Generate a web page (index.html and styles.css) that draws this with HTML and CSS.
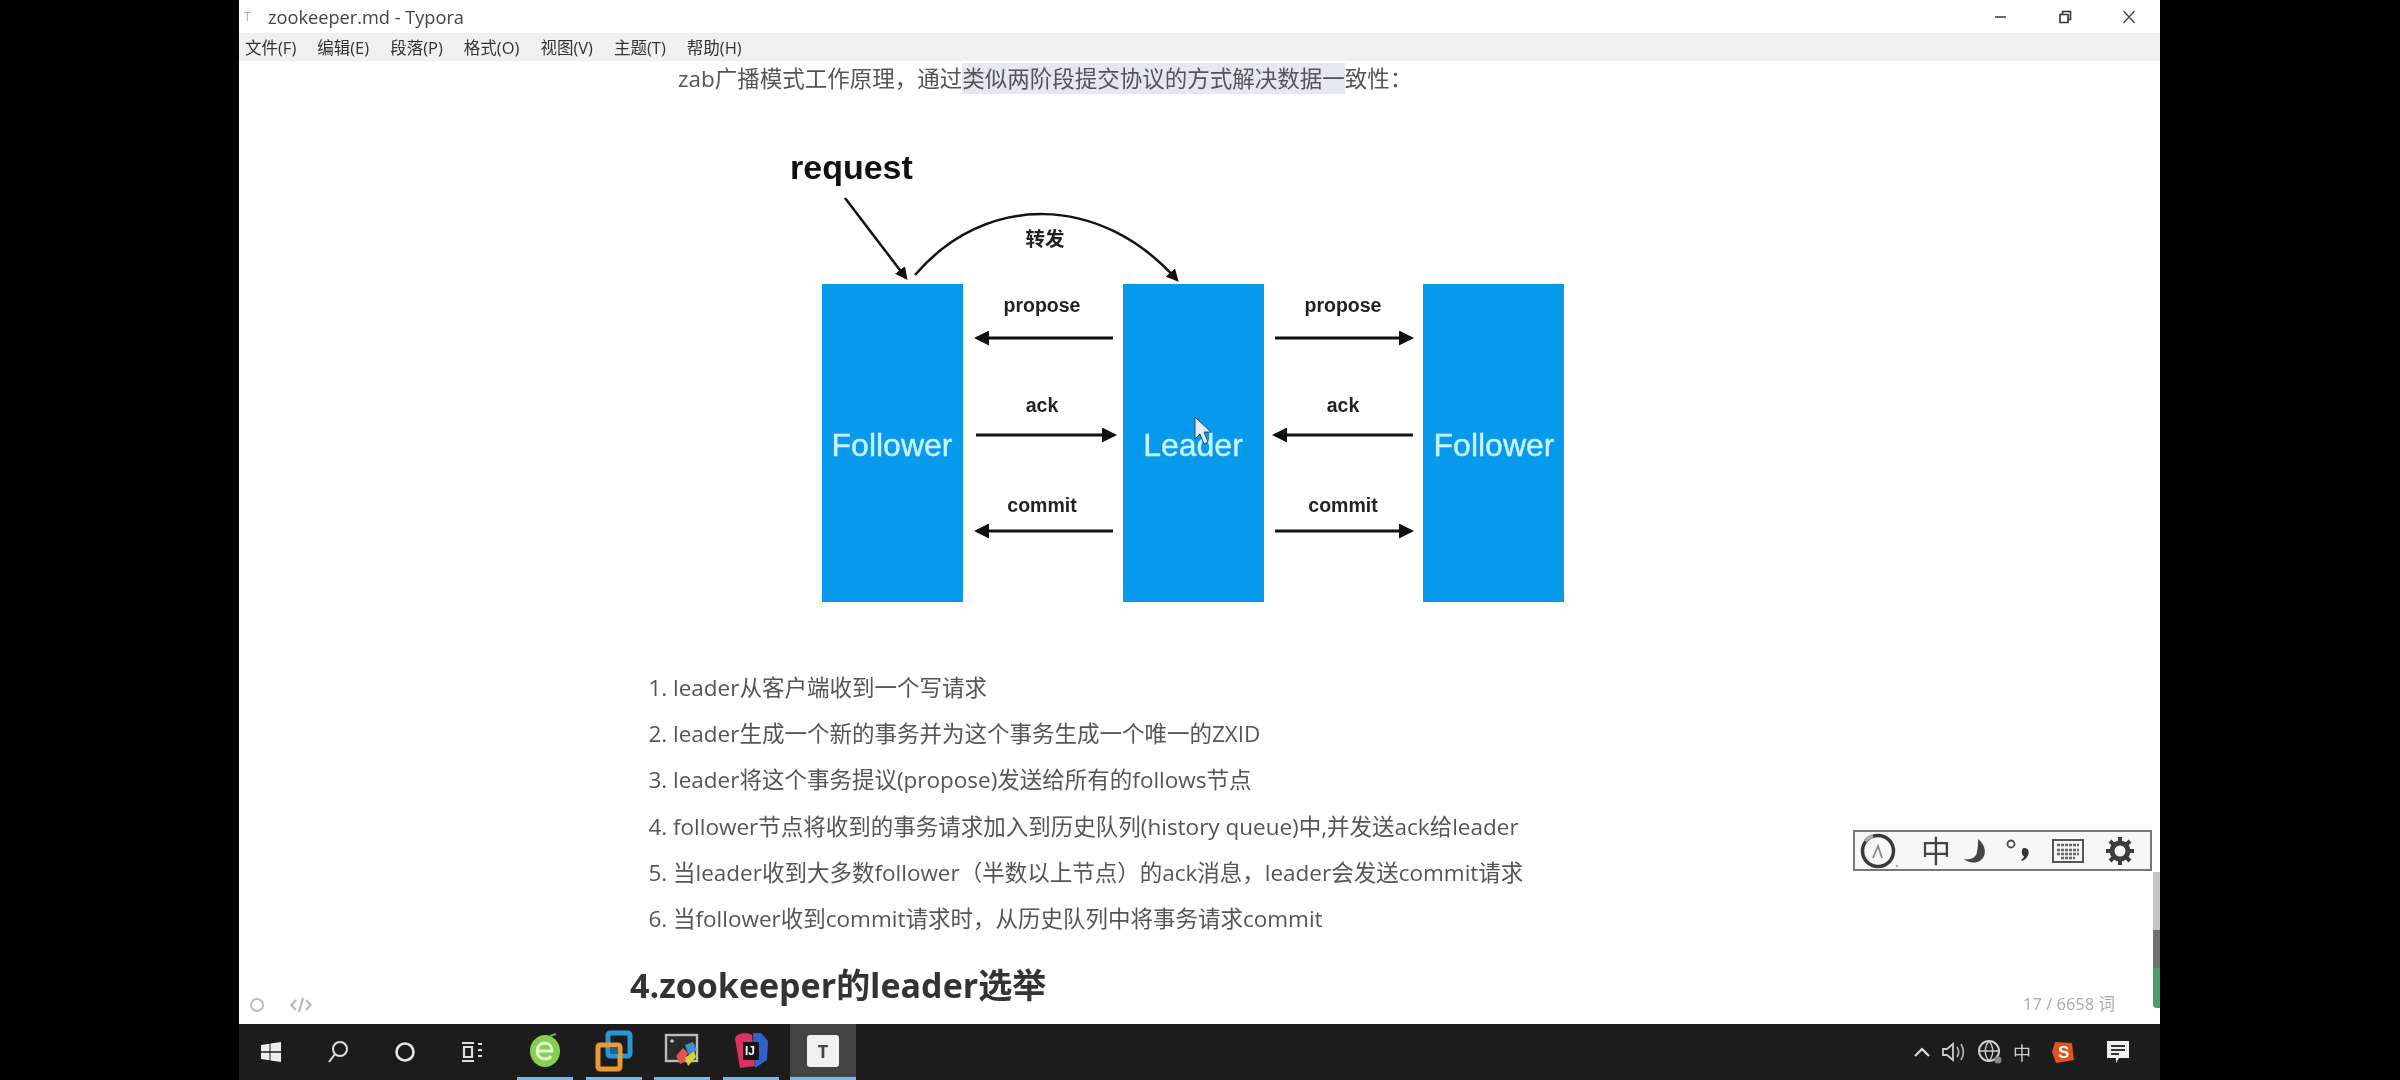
FILE: index.html
```html
<!DOCTYPE html>
<html lang="en">
<head>
  <meta charset="UTF-8">
  <title>zookeeper.md - Typora</title>
  <link rel="stylesheet" href="styles.css">
</head>
<body>

  <div class="window">
    <div class="titlebar">
      <span class="app-mark">T</span>
      <span class="title-text">zookeeper.md - Typora</span>
      <div class="win-buttons">
        <svg width="14" height="14" viewBox="0 0 14 14"><path d="M1 7h11" stroke="#444" stroke-width="1.6"/></svg>
        <svg width="14" height="14" viewBox="0 0 14 14"><path d="M2 4.500h8v8h-8zM4.500 4V1.500h8v8H10.500" fill="none" stroke="#333" stroke-width="1.6"/></svg>
        <svg width="14" height="14" viewBox="0 0 14 14"><path d="M1.500 1l11 12M12.500 1l-11 12" stroke="#444" stroke-width="1.3"/></svg>
      </div>
    </div>

    <div class="menubar">
      <span>文件(F)</span>
      <span>编辑(E)</span>
      <span>段落(P)</span>
      <span>格式(O)</span>
      <span>视图(V)</span>
      <span>主题(T)</span>
      <span>帮助(H)</span>
    </div>

    <div class="editor">
      <p class="intro">zab广播模式工作原理，通过<span class="selected">类似两阶段提交协议的方式解决数据一</span>致性：</p>

      <!-- zab diagram -->
      <svg class="diagram" width="840" height="490" viewBox="0 0 840 490">
        <defs>
          <marker id="head" markerWidth="5" markerHeight="5" refX="4" refY="2.5" orient="auto">
            <path d="M0 0L5 2.5L0 5z" fill="#111"/>
          </marker>
        </defs>
        <text class="d-request" x="30" y="48">request</text>
        <path class="d-line thin" d="M85 67L146 147" marker-end="url(#head)"/>
        <path class="d-line thin" d="M155 144C225 62 340 62 417 149" marker-end="url(#head)"/>
        <text class="d-label" x="285" y="115">转发</text>

        <rect class="d-box" x="62" y="153" width="141" height="318"/>
        <rect class="d-box" x="363" y="153" width="141" height="318"/>
        <rect class="d-box" x="663" y="153" width="141" height="318"/>
        <text class="d-name" x="132" y="325">Follower</text>
        <text class="d-name" x="433" y="325">Leader</text>
        <text class="d-name" x="734" y="325">Follower</text>

        <text class="d-label" x="282" y="181">propose</text>
        <text class="d-label" x="583" y="181">propose</text>
        <text class="d-label" x="282" y="281">ack</text>
        <text class="d-label" x="583" y="281">ack</text>
        <text class="d-label" x="282" y="381">commit</text>
        <text class="d-label" x="583" y="381">commit</text>

        <path class="d-line" d="M353 207H217" marker-end="url(#head)"/>
        <path class="d-line" d="M515 207H651" marker-end="url(#head)"/>
        <path class="d-line" d="M216 304H354" marker-end="url(#head)"/>
        <path class="d-line" d="M653 304H515" marker-end="url(#head)"/>
        <path class="d-line" d="M353 400H217" marker-end="url(#head)"/>
        <path class="d-line" d="M515 400H651" marker-end="url(#head)"/>

        <path d="M435 286V308L440 303L444 313L448 311L444 301H451z" fill="#dfeffa" stroke="#33475a" stroke-width="1"/>
      </svg>

      <ol class="steps">
        <li>leader从客户端收到一个写请求</li>
        <li>leader生成一个新的事务并为这个事务生成一个唯一的ZXID</li>
        <li>leader将这个事务提议(propose)发送给所有的follows节点</li>
        <li>follower节点将收到的事务请求加入到历史队列(history queue)中,并发送ack给leader</li>
        <li>当leader收到大多数follower（半数以上节点）的ack消息，leader会发送commit请求</li>
        <li>当follower收到commit请求时，从历史队列中将事务请求commit</li>
      </ol>

      <h2>4.zookeeper的leader选举</h2>
    </div>

    <!-- ime toolbar floats over the editor -->
    <div class="ime-bar">
      <svg class="ime-gauge" width="40" height="36" viewBox="0 0 40 36"><circle cx="19" cy="18" r="15.500" fill="none" stroke="#3a3a3a" stroke-width="3.500"/><path d="M6 8A16 16 0 0 1 14 3" fill="none" stroke="#aaa" stroke-width="4"/><path d="M14 25L19 13L23 25" fill="none" stroke="#888" stroke-width="1.800"/><circle cx="38" cy="33" r="1.300" fill="#aaa"/></svg>
      <span class="ime-zh">中</span>
      <svg class="ime-moon" width="28" height="30" viewBox="0 0 28 30"><path d="M16 3C24 9 25 19 19 24C14 28 6 27 2 23C9 24 14 22 15 16C16 11 16 7 16 3z" fill="#444"/></svg>
      <svg class="ime-punct" width="30" height="30" viewBox="0 0 30 30"><circle cx="7" cy="8" r="3.500" fill="none" stroke="#444" stroke-width="1.800"/><path d="M20 12c5 0 6 5 3 9c-1 2-3 3-5 4l-1-1c2-1 3-3 3-4c-3 0-3-8 0-8z" fill="#333"/></svg>
      <svg class="ime-keys" width="32" height="24" viewBox="0 0 32 24"><rect x="1" y="1" width="30" height="22" fill="none" stroke="#555" stroke-width="2"/><path d="M5 6h22M5 11h22M5 15h22M9 19h14" stroke="#666" stroke-width="2.400" stroke-dasharray="3 1"/></svg>
      <svg class="ime-gear" width="30" height="30" viewBox="0 0 30 30"><circle cx="15" cy="15" r="8" fill="none" stroke="#3d3d3d" stroke-width="5"/><path d="M15 1v6M15 23v6M1 15h6M23 15h6M5 5l4 4M21 21l4 4M25 5l-4 4M9 21l-4 4" stroke="#3d3d3d" stroke-width="4"/></svg>
    </div>

    <div class="scroll-marks">
      <div class="mark-light"></div>
      <div class="mark-dark"></div>
      <div class="mark-green"></div>
    </div>

    <div class="statusbar">
      <svg width="16" height="16" viewBox="0 0 16 16"><circle cx="8" cy="8" r="6" fill="none" stroke="#bbb" stroke-width="2"/></svg>
      <svg class="code-icon" width="22" height="16" viewBox="0 0 22 16"><path d="M6 3L1.500 8L6 13M16 3L20.500 8L16 13M13 1L9 15" fill="none" stroke="#bbb" stroke-width="2.400"/></svg>
      <span class="word-count">17 / 6658 词</span>
    </div>
  </div>

  <div class="taskbar">
    <div class="task-left">
      <svg width="22" height="22" viewBox="0 0 22 22"><path d="M1 4l8.500-1.300V10.300H1zM10.500 2.500L21 1V10.300H10.500zM1 11.700H9.500V19.300L1 18zM10.500 11.700H21V21L10.500 19.500z" fill="#eee"/></svg>
      <svg width="24" height="24" viewBox="0 0 24 24"><circle cx="14" cy="9" r="7" fill="none" stroke="#ddd" stroke-width="2"/><path d="M9 14L3 22" stroke="#ddd" stroke-width="2"/></svg>
      <svg width="22" height="22" viewBox="0 0 22 22"><circle cx="11" cy="11" r="8.500" fill="none" stroke="#e6e6e6" stroke-width="2.600"/></svg>
      <svg width="24" height="22" viewBox="0 0 24 22"><path d="M2 2h12M2 20h12M4 6h8v10H4zM18 3h4M18 9h4M18 15h4" fill="none" stroke="#ddd" stroke-width="2.200"/></svg>
    </div>
    <div class="task-apps">
      <div class="task-app running"><svg width="34" height="38" viewBox="0 0 34 38"><ellipse cx="17" cy="19" rx="15" ry="16" fill="#85d04f"/><path d="M9 19h15c0-5-3-8-7-8s-8 3-8 8s4 8 8 8c3 0 5-1 6-3" fill="none" stroke="#e6f7d2" stroke-width="2.800"/><path d="M22 4l6-2" stroke="#6fb53d" stroke-width="2"/></svg></div>
      <div class="task-app running"><svg width="38" height="42" viewBox="0 0 38 42"><rect x="13" y="3" width="22" height="23" rx="2" fill="none" stroke="#2596d6" stroke-width="5"/><rect x="3" y="15" width="22" height="24" rx="2" fill="none" stroke="#eb9a33" stroke-width="5"/><rect x="15" y="17" width="8" height="7" fill="#17698f"/></svg></div>
      <div class="task-app running"><svg width="36" height="38" viewBox="0 0 36 38"><rect x="2" y="3" width="31" height="26" fill="#2a2a2a" stroke="#bbb" stroke-width="2.400"/><path d="M12 24l7-8l5 5l-3 9l-5 2z" fill="#df5550"/><path d="M21 13l8-3l4 8l-8 5z" fill="#3c8fd8"/><path d="M21 26l9-7l2 6l-8 9z" fill="#d9d22f"/><circle cx="8" cy="9" r="1.800" fill="#ccc"/></svg></div>
      <div class="task-app running"><svg width="38" height="42" viewBox="0 0 38 42"><path d="M3 9C3 3 16 2 20 5L23 36L8 38z" fill="#d8345f"/><path d="M21 3h8l7 8l-1 19l-12 8z" fill="#2f62cf"/><rect x="11" y="12" width="16" height="18" fill="#141414"/><text class="ij-mark" x="13" y="25">IJ</text></svg></div>
      <div class="task-app active"><span class="typora-tile">T</span></div>
    </div>
    <div class="tray">
      <svg width="18" height="12" viewBox="0 0 18 12"><path d="M2 10L9 3L16 10" fill="none" stroke="#ddd" stroke-width="2.200"/></svg>
      <svg width="26" height="24" viewBox="0 0 26 24"><path d="M2 9h4l6-5v16l-6-5H2z" fill="none" stroke="#ccc" stroke-width="1.800"/><path d="M16 7c2 3 2 7 0 10M20 4c3 5 3 11 0 16" fill="none" stroke="#aaa" stroke-width="1.800"/></svg>
      <svg width="26" height="26" viewBox="0 0 26 26"><circle cx="12" cy="12" r="10" fill="none" stroke="#ccc" stroke-width="2"/><path d="M2 12h20M12 2c-5 6-5 14 0 20M12 2c5 6 5 14 0 20" fill="none" stroke="#ccc" stroke-width="1.400"/><circle cx="21" cy="21" r="3.500" fill="#888"/></svg>
      <span class="tray-zh">中</span>
      <svg class="sogou" width="24" height="24" viewBox="0 0 24 24"><path d="M4 2L21 3L23 20L5 23L1 12z" fill="#e0531f"/><text class="sogou-s" x="7" y="18">S</text></svg>
      <svg class="notify" width="26" height="26" viewBox="0 0 26 26"><path d="M2 2h22v17H14l-3 5v-5H2z" fill="#eee"/><path d="M6 7h14M6 11h14M6 15h8" stroke="#333" stroke-width="2"/></svg>
    </div>
  </div>

</body>
</html>
```

FILE: styles.css
```css
body {
  margin: 0;
  width: 2400px;
  height: 1080px;
  background-color: #000;
  display: flex;
  flex-direction: column;
  overflow: hidden;
  padding-left: 239px;
  box-sizing: border-box;
  font-family: "Open Sans", "Noto Sans CJK SC", sans-serif;
  filter: blur(0.6px);
}

.window {
  position: relative;
  width: 1921px;
  height: 1024px;
  background-color: #fff;
  display: flex;
  flex-direction: column;
  overflow: hidden;
}

.titlebar {
  height: 33px;
  display: flex;
  align-items: center;
  padding-left: 5px;
  color: #444;
}

.app-mark {
  width: 24px;
  color: #aaa;
  font-size: 12px;
}

.title-text {
  font-size: 18.200px;
}

.win-buttons {
  margin-left: auto;
  display: flex;
  gap: 50px;
  padding-right: 24px;
}

.menubar {
  height: 28px;
  background-color: #f0f0f0;
  display: flex;
  align-items: center;
  gap: 21px;
  padding-left: 6px;
  font-size: 16.500px;
  color: #333;
}

.editor {
  flex: 1;
  padding-left: 391px;
  color: #555;
  font-size: 22.500px;
}

.intro {
  margin: 0 0 0 48px;
  line-height: 36px;
  height: 36px;
}

.selected {
  background-color: #e3e8f1;
}

.diagram {
  display: block;
  margin: 34px 0 0 130px;
}

.d-request {
  font: bold 34px "Liberation Sans", sans-serif;
  fill: #111;
}

.d-line {
  fill: none;
  stroke: #111;
  stroke-width: 3px;
}

.d-line.thin {
  stroke-width: 2.500px;
}

.d-box {
  fill: #0799ec;
}

.d-name {
  font: 32px "Liberation Sans", sans-serif;
  fill: #c8f2ff;
  stroke: #c8f2ff;
  stroke-width: 0.4px;
  text-anchor: middle;
}

.d-label {
  font: bold 19.500px "Liberation Sans", "Noto Sans CJK SC", sans-serif;
  fill: #222;
  text-anchor: middle;
}

.steps {
  margin: 44px 0 0 0;
  padding-left: 43px;
}

.steps li {
  height: 46.200px;
  line-height: 46px;
}

.editor h2 {
  margin: 21px 0 0 0;
  font-size: 34px;
  line-height: 44px;
  color: #333;
}

.ime-bar {
  position: absolute;
  left: 1614px;
  top: 830px;
  width: 299px;
  height: 41px;
  box-sizing: border-box;
  border: 2px solid #777;
  background-color: #f7f7f7;
  display: flex;
  align-items: center;
  padding-left: 4px;
}

.ime-zh {
  margin-left: 22px;
  width: 30px;
  font-size: 30px;
  color: #444;
  line-height: 1;
}

.ime-moon {
  margin-left: 11px;
}

.ime-punct {
  margin-left: 14px;
}

.ime-keys {
  margin-left: 18px;
}

.ime-gear {
  margin-left: 21px;
}

.scroll-marks {
  position: absolute;
  right: 0;
  top: 872px;
  width: 7px;
  height: 136px;
  display: flex;
  flex-direction: column;
}

.mark-light {
  height: 58px;
  background-color: #c4c4c4;
}

.mark-dark {
  height: 38px;
  background-color: #707070;
}

.mark-green {
  height: 40px;
  background-color: #4a9e6c;
  border-radius: 0 0 0 4px;
}

.statusbar {
  position: absolute;
  left: 10px;
  right: 12px;
  top: 990px;
  height: 30px;
  display: flex;
  align-items: center;
  gap: 25px;
}

.word-count {
  margin-left: auto;
  color: #aaa;
  font-size: 16.500px;
  padding: 0 33px 4px 0;
}

.taskbar {
  width: 1921px;
  height: 56px;
  background-color: #1c1c1c;
  display: flex;
  align-items: center;
  color: #ddd;
}

.task-left {
  display: flex;
  align-items: center;
  gap: 44px;
  padding-left: 21px;
}

.task-apps {
  display: flex;
  margin-left: 33px;
  align-self: stretch;
  gap: 12.500px;
}

.task-app {
  width: 56px;
  display: flex;
  align-items: center;
  justify-content: center;
  box-sizing: border-box;
  border-bottom: 3px solid #76b9ed;
}

.task-app.active {
  width: 66px;
  margin-left: -1px;
  background-color: #444;
}

.typora-tile {
  width: 32px;
  height: 32px;
  background-color: #f0f0f0;
  color: #444;
  border-radius: 3px;
  font-size: 18px;
  font-weight: bold;
  text-align: center;
  line-height: 32px;
}

.ij-mark {
  font: bold 12px "Liberation Sans", sans-serif;
  fill: #fff;
}

.tray {
  margin-left: auto;
  display: flex;
  align-items: center;
  gap: 10px;
  padding-right: 29px;
}

.tray-zh {
  font-size: 18px;
  color: #ccc;
}

.sogou {
  margin-left: 10px;
}

.sogou-s {
  font: bold 17px "Liberation Sans", sans-serif;
  fill: #fff;
}

.notify {
  margin-left: 20px;
}
```
